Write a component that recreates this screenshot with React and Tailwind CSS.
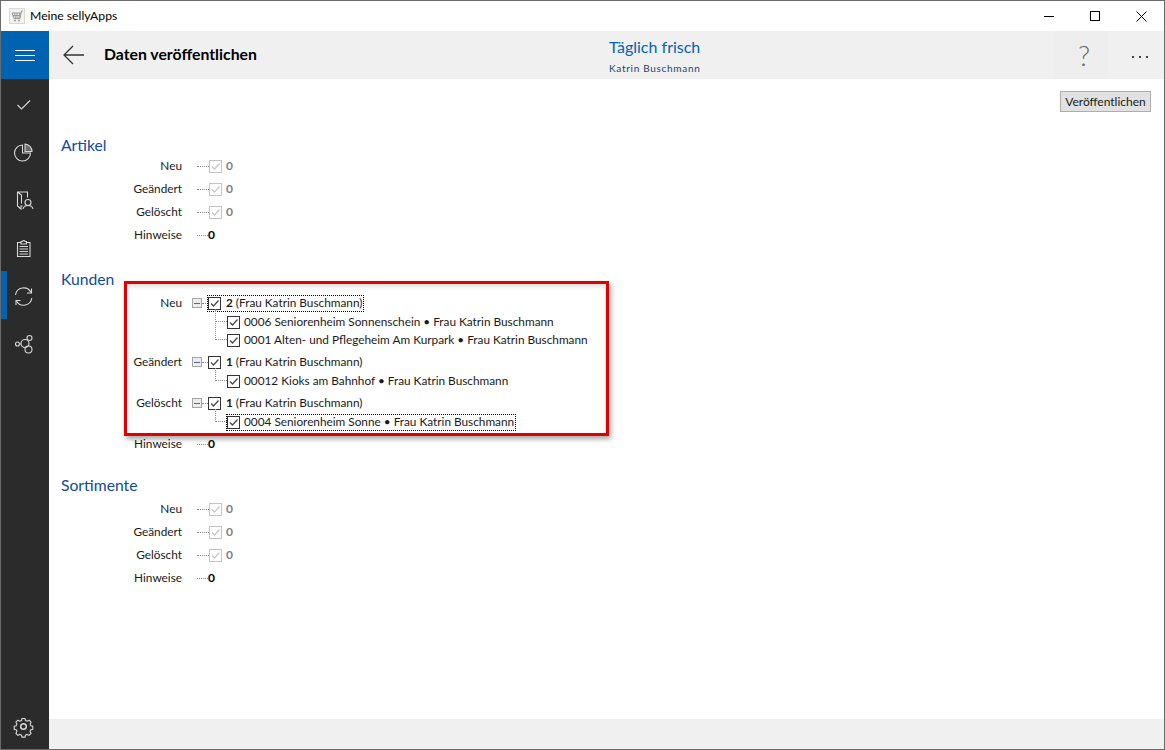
import React from 'react';

const FONT = "font-['Lato','Noto_Sans','Liberation_Sans',sans-serif]";

const NAV_ICONS = [
    // check
    <path key="c" d="M16.500 25l4 4 8.500-8.500" />,
    // pie
    <g key="p"><path d="M21.500 17a8 8 0 1 0 8 8h-8z" /><path d="M24 16v7.500h7A7.500 7.500 0 0 0 24 16z" fill="#6a6a6a" /></g>,
    // book with person
    <g key="b"><path d="M26.500 21.500V16H16.500v14l3.500 3v-3h1.500M16.500 16l4 3v8.500" /><circle cx="27" cy="26.500" r="3" /><path d="M22 33c.5-2.500 2.500-3.500 5-3.500s4.500 1 5 3.500" /></g>,
    // clipboard
    <g key="l"><path d="M20 18.500h-3.500v14h12.500v-14H25.500" /><path d="M20 20v-2.500h1.500a1.300 1.300 0 0 1 2.500 0h1.500V20zM18.500 22.500h8.500M18.500 25h8.500M18.500 27.500h8.500M18.500 30h8.500" /></g>,
    // sync
    <g key="s"><path d="M14.500 23A8.200 8.200 0 0 1 30 20.500M30.800 26A8.200 8.200 0 0 1 15.500 29" /><path d="M30.500 16.500V21H26M15 33v-4.500h4.500" /></g>,
    // share nodes
    <g key="n"><circle cx="16.500" cy="24" r="2" /><circle cx="28.500" cy="18" r="2.500" /><circle cx="24" cy="23.500" r="4" /><circle cx="27.500" cy="29.500" r="3.500" /><path d="M18.500 24H20" /></g>,
];

const NavIcon = ({ children }) => (
    <svg width="46" height="46" viewBox="0 0 46 46" fill="none" stroke="#d8d8d8" strokeWidth="1.100" className="shrink-0">
        {children}
    </svg>
);

const Sidebar = () => (
    <aside className="w-[48px] shrink-0 bg-[#2b2b2b] flex flex-col">
        <div className="h-[48px] bg-[#0063b1] flex flex-col items-center justify-center gap-[4px]">
            <span className="block w-[20px] h-px bg-white" />
            <span className="block w-[20px] h-px bg-white" />
            <span className="block w-[20px] h-px bg-white" />
        </div>
        {NAV_ICONS.map((icon, i) => (
            <div key={i} className="h-[48px] flex items-center border-l-[6px] border-transparent" style={i === 4 ? { borderLeftColor: '#0063b1' } : undefined}>
                <div className="-ml-[6px]"><NavIcon>{icon}</NavIcon></div>
            </div>
        ))}
        <div className="mt-auto h-[46px] flex items-center">
            <svg width="46" height="46" viewBox="0 0 46 46" fill="none" stroke="#d8d8d8" strokeWidth="1.100">
                <circle cx="22.500" cy="23.500" r="2.800" strokeWidth="1.500" />
                <path d="M21 15.500h3l.5 2 1.700.7 1.900-1 2 2-1 1.900.7 1.700 2 .5v3l-2 .5-.7 1.700 1 1.900-2 2-1.900-1-1.700.7-.5 2h-3l-.5-2-1.700-.7-1.900 1-2-2 1-1.900-.7-1.700-2-.5v-3l2-.5.7-1.700-1-1.900 2-2 1.900 1 1.700-.7z" />
            </svg>
        </div>
    </aside>
);

const Check = ({ disabled }) => (
    <svg width="13" height="13" viewBox="0 0 13 13" className="shrink-0 bg-white">
        <rect x="0.500" y="0.500" width="12" height="12" fill="none" stroke={disabled ? '#c4c4c4' : '#333333'} />
        <path d="M3 6.500l2.500 2.500 5-5.500" fill="none" stroke={disabled ? '#c8c8c8' : '#484848'} strokeWidth="1.300" />
    </svg>
);

const Expander = () => (
    <span className="w-[10px] h-[10px] shrink-0 border border-[#a6a6a6] bg-[#ececec] flex items-center justify-center">
        <span className="block w-[6px] h-px bg-[#4a6a9a]" />
    </span>
);

const Dots = ({ width }) => (
    <span className="block h-0 border-t border-dotted border-[#8a8a8a]" style={{ width }} />
);

const Label = ({ className = '', children }) => (
    <span className={`w-[133px] shrink-0 text-right text-[11.800px] text-[#1a1a1a] ${className}`}>{children}</span>
);

const HintRow = () => (
    <div className="h-[23px] flex items-center">
        <Label className="-mt-[2px]">Hinweise</Label>
        <span className="ml-[15px]"><Dots width="11px" /></span>
        <span className="-mt-[2px] text-[12px] font-bold text-black">0</span>
    </div>
);

const SummaryRows = () => (
    <>
        {['Neu', 'Geändert', 'Gelöscht'].map((label) => (
            <div key={label} className="h-[23px] flex items-center">
                <Label className="-mt-[2px]">{label}</Label>
                <span className="ml-[15px]"><Dots width="12px" /></span>
                <Check disabled />
                <span className="ml-[4px] -mt-[2px] text-[12px] font-bold text-[#808080]">0</span>
            </div>
        ))}
        <HintRow />
    </>
);

const Heading = ({ className, children }) => (
    <h2 className={`h-[20px] ml-[12px] flex items-center text-[15.700px] leading-none text-[#0f4a9c] ${className}`}>{children}</h2>
);

const TreeParent = ({ label, count, focused, className = '' }) => (
    <div className={`h-[18px] mb-px flex items-center ${className}`}>
        <Label>{label}</Label>
        <span className="ml-[10px]"><Expander /></span>
        <Dots width="6px" />
        <span className={`h-[15px] flex items-center pr-px ${focused ? 'outline outline-1 outline-dotted outline-black' : ''}`}>
            <Check />
            <span className="ml-[5px] text-[11.800px] text-[#1a1a1a] whitespace-nowrap"><b>{count}</b> (Frau Katrin Buschmann)</span>
        </span>
    </div>
);

const TreeChild = ({ text, focused, lineHeight = 13 }) => (
    <div className="h-[18px] flex items-center pl-[166px]">
        <span className="w-[12px] shrink-0 self-start border-l border-b border-dotted border-[#8a8a8a]" style={{ height: lineHeight, marginTop: 9 - lineHeight }} />
        <span className={`h-[15px] flex items-center pr-px ${focused ? 'outline outline-1 outline-dotted outline-black' : ''}`}>
            <Check />
            <span className="ml-[4px] text-[11.800px] text-[#1a1a1a] whitespace-nowrap">{text}</span>
        </span>
    </div>
);

export default function App() {
    return (
        <div className={`${FONT} w-[1165px] h-[750px] flex flex-col bg-white border border-[#6b6b6b] overflow-hidden`}>
            <header className="h-[30px] shrink-0 flex items-center">
                <svg width="16" height="16" viewBox="0 0 16 16" className="ml-[8px]">
                    <rect x="0.500" y="0.500" width="15" height="15" fill="#f4f2ee" stroke="#d8d8d8" />
                    <path d="M14 3h-1.500l-1.500 7.500H5L3 5h9M5.500 5l1 5.500M8 5v5.500M10.500 5L10 10.500M4 7.500h7.500" fill="none" stroke="#9a9a9a" />
                    <circle cx="6" cy="12.500" r="1" fill="#9a9a9a" />
                    <circle cx="10" cy="12.500" r="1" fill="#9a9a9a" />
                </svg>
                <span className="ml-[5px] text-[12.200px] text-black">Meine sellyApps</span>
                <div className="ml-auto flex items-center">
                    <span className="w-[46px] flex justify-center"><span className="block w-[10px] h-px bg-black" /></span>
                    <span className="w-[46px] flex justify-center"><span className="block w-[10px] h-[10px] border border-black" /></span>
                    <span className="w-[46px] flex justify-center">
                        <svg width="11" height="11" viewBox="0 0 11 11" stroke="#000000" fill="none"><path d="M.5.500l10 10M10.500.500l-10 10" /></svg>
                    </span>
                </div>
            </header>

            <div className="flex-1 min-h-0 flex">
                <Sidebar />
                <div className="flex-1 min-w-0 flex flex-col">
                    <div className="h-[48px] shrink-0 bg-[#f0f0f0] flex items-center">
                        <span className="w-[55px] shrink-0 pl-[14px] -mt-px">
                            <svg width="21" height="20" viewBox="0 0 21 20" fill="none" stroke="#333333" strokeWidth="1.300"><path d="M21 10H1M10 1l-9 9 9 9" /></svg>
                        </span>
                        <span className="w-[505px] shrink-0 -mt-[2px] text-[15.800px] font-bold text-black">Daten veröffentlichen</span>
                        <div className="flex flex-col self-stretch justify-between pt-[6px] pb-[4px]">
                            <span className="text-[16px] leading-[20px] text-[#0063b1]">Täglich frisch</span>
                            <span className="text-[10px] leading-[14px] tracking-[0.7px] text-[#1f3f70]">Katrin Buschmann</span>
                        </div>
                        <span className="ml-auto w-[54px] self-stretch bg-[#eeeeee] flex items-center justify-center pl-[6px] text-[28px] font-light text-[#666666]">?</span>
                        <span className="w-[56px] self-stretch flex items-center justify-center gap-[5px] pl-[8px] pt-[3px]">
                            <span className="w-[2px] h-[2px] bg-[#444444]" />
                            <span className="w-[2px] h-[2px] bg-[#444444]" />
                            <span className="w-[2px] h-[2px] bg-[#444444]" />
                        </span>
                    </div>

                    <main className="relative flex-1 min-h-0">
                        <div className="flex justify-end pt-[12px] pr-[13px]">
                            <button className="h-[21px] w-[91px] bg-[#e1e1e1] border border-[#adadad] text-[12px] text-[#1a1a1a] flex items-center justify-center">Veröffentlichen</button>
                        </div>

                        <Heading className="mt-[23px] pt-[2px]">Artikel</Heading>
                        <SummaryRows />

                        <Heading className="mt-[23px]">Kunden</Heading>
                        <TreeParent label="Neu" count="2" focused className="mt-[4px]" />
                        <TreeChild text="0006 Seniorenheim Sonnenschein • Frau Katrin Buschmann" />
                        <TreeChild text="0001 Alten- und Pflegeheim Am Kurpark • Frau Katrin Buschmann" lineHeight={30} />
                        <TreeParent label="Geändert" count="1" className="mt-[4px]" />
                        <TreeChild text="00012 Kioks am Bahnhof • Frau Katrin Buschmann" />
                        <TreeParent label="Gelöscht" count="1" className="mt-[4px]" />
                        <TreeChild text="0004 Seniorenheim Sonne • Frau Katrin Buschmann" focused />
                        <div className="mt-[2px]"><HintRow /></div>

                        <Heading className="mt-[19px] pt-[2px]">Sortimente</Heading>
                        <div className="mt-[3px]"><SummaryRows /></div>

                        {/* red annotation over the screenshot */}
                        <div className="absolute left-[75px] top-[202px] w-[485px] h-[155px] border-[3px] border-[#e00000] shadow-[2px_3px_5px_rgba(0,0,0,0.35),inset_0_3px_4px_rgba(0,0,0,0.12)] pointer-events-none" />
                    </main>

                    <div className="h-[30px] shrink-0 bg-[#f0f0f0]" />
                </div>
            </div>
        </div>
    );
}
